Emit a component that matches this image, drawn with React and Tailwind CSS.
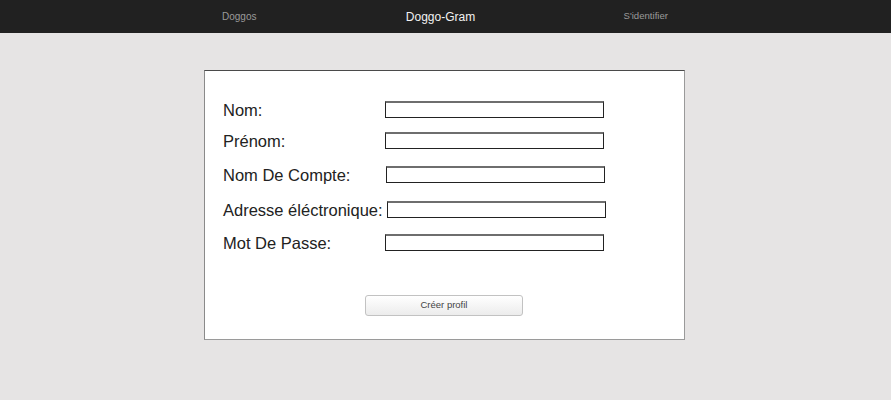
import React from 'react';

const fields = [
  { label: 'Nom:', type: 'text', row: 'mt-[30px]', input: 'ml-[162px]' },
  { label: 'Prénom:', type: 'text', row: 'mt-[14px]', input: 'ml-[162px]' },
  { label: 'Nom De Compte:', type: 'text', row: 'mt-[17px]', input: 'ml-[163px]' },
  { label: 'Adresse éléctronique:', type: 'email', row: 'mt-[18px]', input: 'ml-[164px]' },
  { label: 'Mot De Passe:', type: 'password', row: 'mt-[16px]', input: 'ml-[162px]' },
];

const App = () => {
  return (
    <div className="min-h-[400px] bg-[#e6e4e4] font-['Liberation_Sans',Arial,sans-serif]">
      {/* barre de navigation */}
      <nav className="h-[33px] bg-[#212121]">
        <div className="mx-auto flex h-full w-[445px] items-center justify-between">
          <a className="-ml-[1px] text-[10px] text-[#9a9a9a]">Doggos</a>
          <span className="ml-[1px] text-[12px] text-[#f2f2f2]">Doggo-Gram</span>
          <a className="text-[9.6px] text-[#9a9a9a]">S'identifier</a>
        </div>
      </nav>

      {/* formulaire */}
      <div className="flex justify-center pr-[2px] pt-[37px]">
        <div className="h-[270px] w-[481px] border border-[#9a9a9a] border-t-[#4a4a4a] border-l-[#8a8a8a] bg-white pl-[18px]">
          {fields.map((f) => (
            <div key={f.label} className={`relative flex h-[17px] items-center ${f.row}`}>
              <label className="absolute left-0 top-[1px] whitespace-nowrap text-[16.5px] leading-none text-[#222]">
                {f.label}
              </label>
              <input
                type={f.type}
                className={`h-[17px] w-[219px] border border-t-2 border-[#222] border-t-[#6e6e6e] bg-white outline-none ${f.input}`}
              />
            </div>
          ))}

          <div className="mt-[44px] flex pl-[142px]">
            <button className="h-[21px] w-[158px] rounded-[3px] border border-[#c2c2c2] bg-gradient-to-b from-white to-[#ececec] text-[9.5px] text-[#444]">
              Créer profil
            </button>
          </div>
        </div>
      </div>
    </div>
  );
};

export default App;
